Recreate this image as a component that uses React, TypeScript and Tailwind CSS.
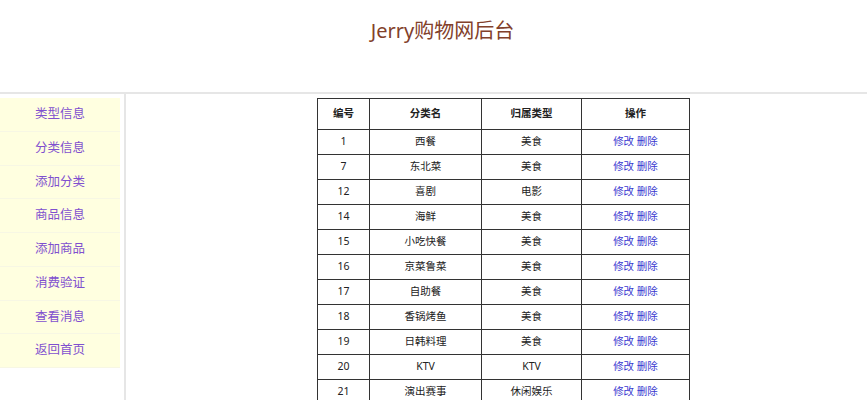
import React from "react";

const menu = ["类型信息", "分类信息", "添加分类", "商品信息", "添加商品", "消费验证", "查看消息", "返回首页"];

const rows: [string, string, string][] = [
  ["1", "西餐", "美食"],
  ["7", "东北菜", "美食"],
  ["12", "喜剧", "电影"],
  ["14", "海鲜", "美食"],
  ["15", "小吃快餐", "美食"],
  ["16", "京菜鲁菜", "美食"],
  ["17", "自助餐", "美食"],
  ["18", "香锅烤鱼", "美食"],
  ["19", "日韩料理", "美食"],
  ["20", "KTV", "KTV"],
  ["21", "演出赛事", "休闲娱乐"],
];

export default function App() {
  return (
    <div
      className="w-[867px] h-[400px] overflow-hidden bg-white"
      style={{ fontFamily: '"Noto Sans", "Noto Sans CJK SC", sans-serif' }}
    >
      <div className="h-[94px] flex justify-center pt-[17px] border-b-2 border-[#e6e6e6]">
        <h1 className="text-[20px] leading-[28px] text-[#82402a] ml-[18px]">Jerry购物网后台</h1>
      </div>
      <div className="flex h-[306px]">
        <div className="w-[126px] pt-[4px] border-r-2 border-[#e6e6e6]">
          <div className="w-[120px] flex flex-col">
            {menu.map((m) => (
              <div
                key={m}
                className="h-[33.75px] flex items-center justify-center bg-[#ffffe0] border-b border-[#f7f7e4] text-[12.5px] text-[#7f50cf]"
              >
                {m}
              </div>
            ))}
          </div>
        </div>
        <div className="flex-1 pt-[4px] pl-[191px]">
          <table className="border-collapse border border-[#333] text-[10.5px] text-[#222] text-center">
            <thead>
              <tr className="h-[31px]">
                <th className="w-[52px] border border-[#333] font-bold">编号</th>
                <th className="w-[112px] border border-[#333] font-bold">分类名</th>
                <th className="w-[100px] border border-[#333] font-bold">归属类型</th>
                <th className="w-[108px] border border-[#333] font-bold">操作</th>
              </tr>
            </thead>
            <tbody>
              {rows.map(([id, name, type]) => (
                <tr key={id} className="h-[25px]">
                  <td className="border border-[#333]">{id}</td>
                  <td className="border border-[#333]">{name}</td>
                  <td className="border border-[#333]">{type}</td>
                  <td className="border border-[#333] text-[#3838d0]">
                    <span>修改</span> <span>删除</span>
                  </td>
                </tr>
              ))}
            </tbody>
          </table>
        </div>
      </div>
    </div>
  );
}
